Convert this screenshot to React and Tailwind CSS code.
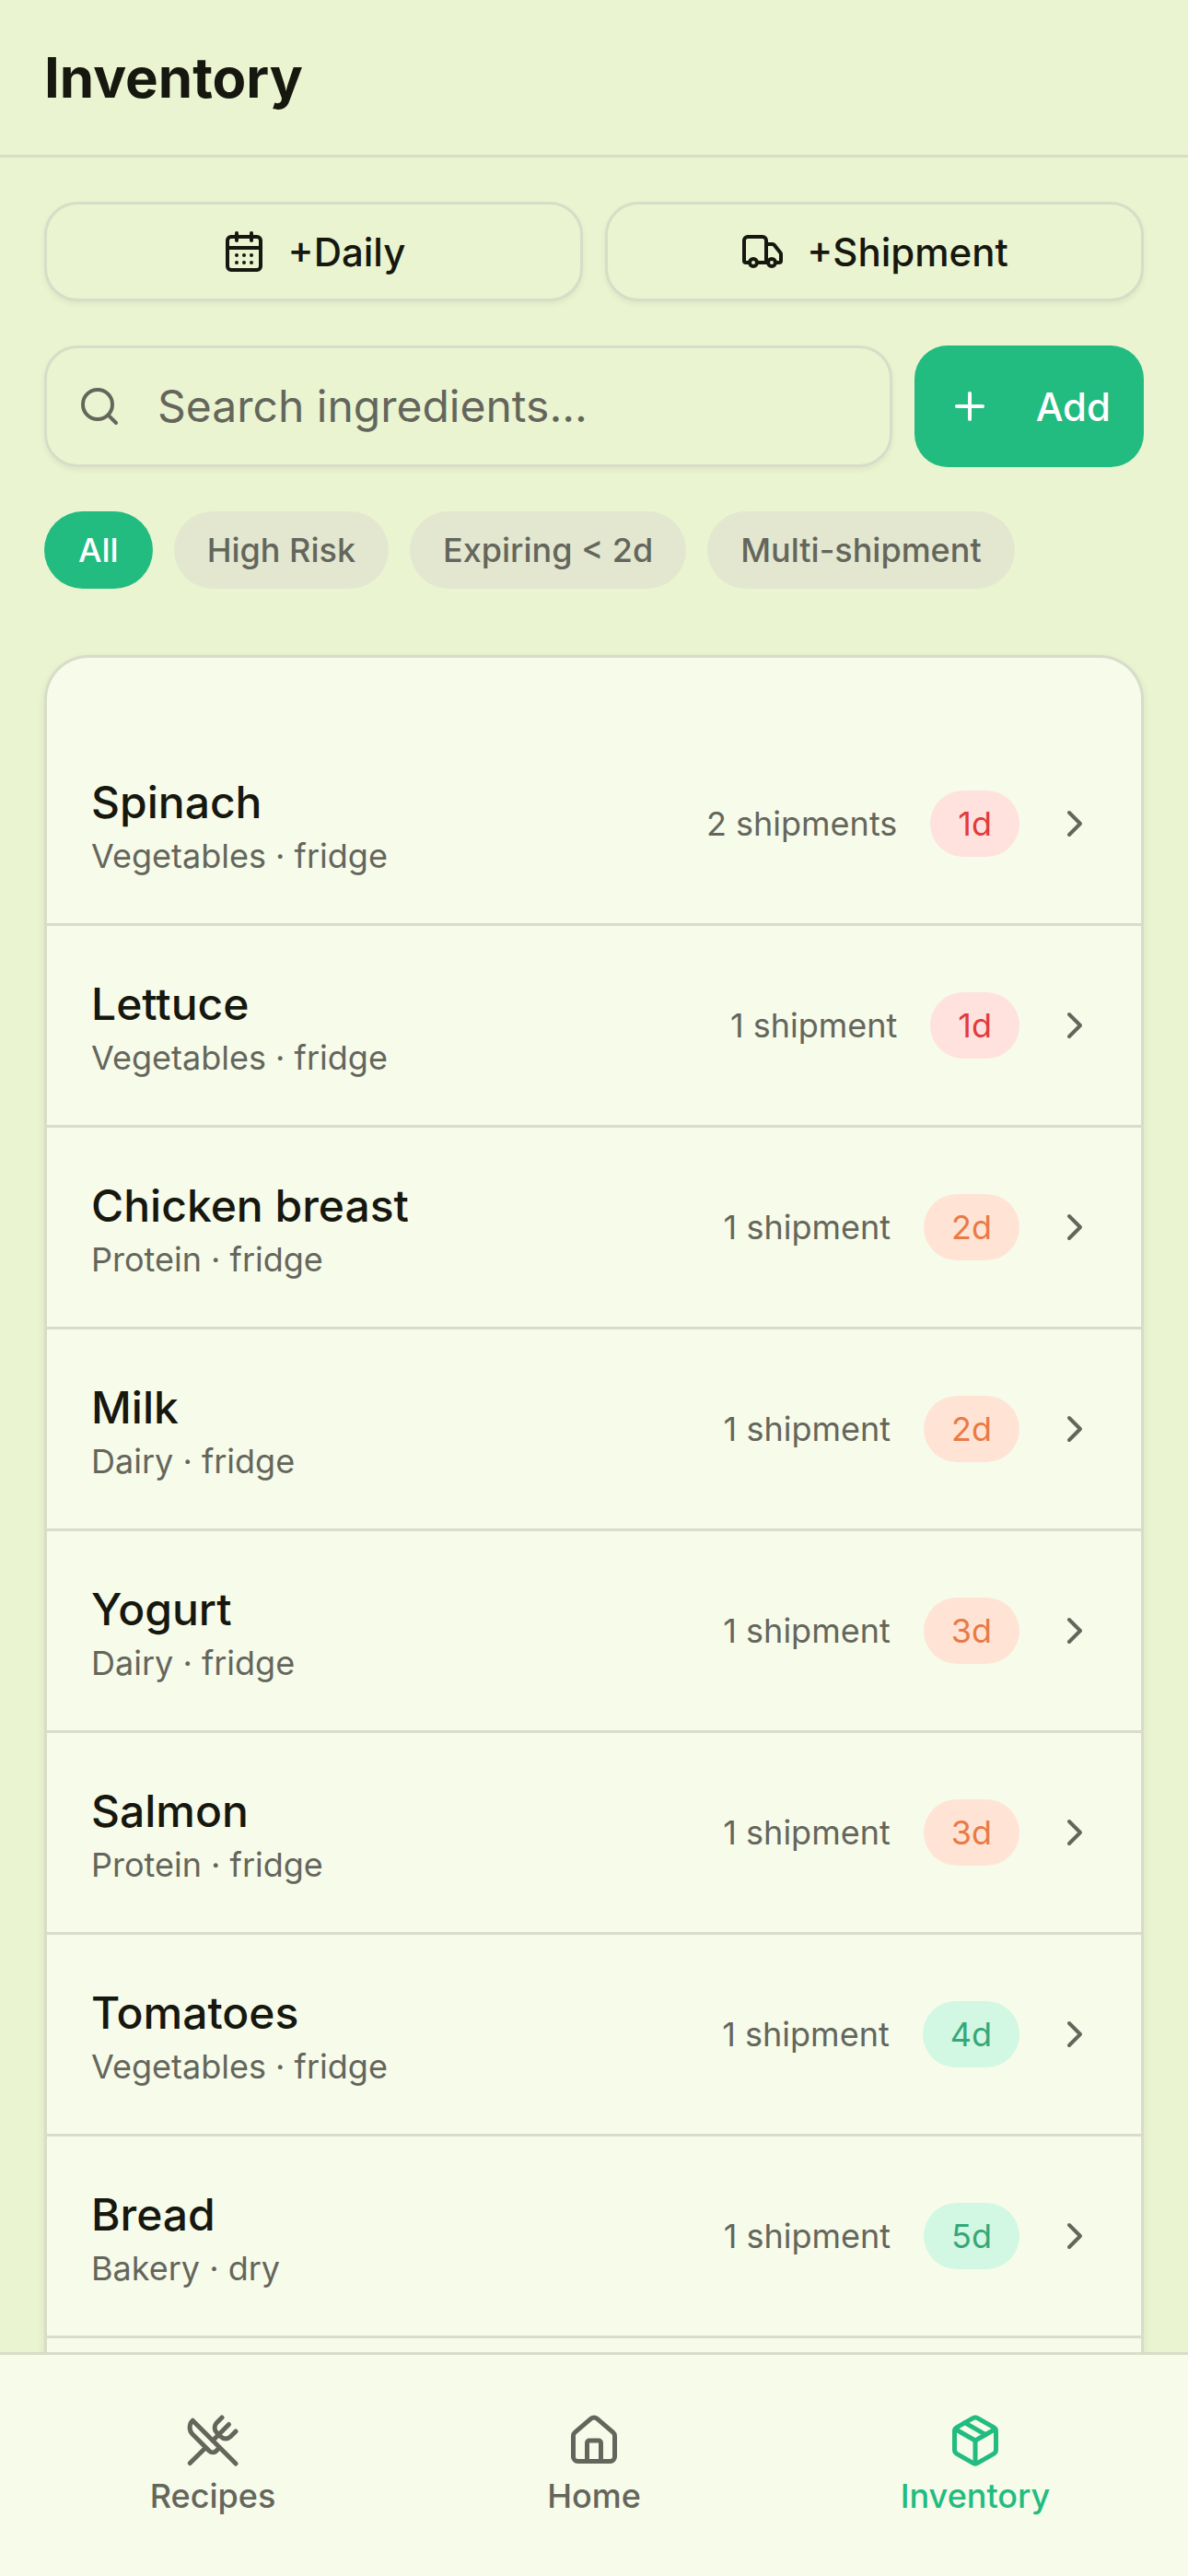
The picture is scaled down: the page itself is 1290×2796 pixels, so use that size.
import React from "react";
import { CalendarDays, Truck, Search, Plus, ChevronRight, UtensilsCrossed, House, Package } from "lucide-react";

const rows = [
  ["Spinach", "Vegetables · fridge", "2 shipments", "1d", "red"],
  ["Lettuce", "Vegetables · fridge", "1 shipment", "1d", "red"],
  ["Chicken breast", "Protein · fridge", "1 shipment", "2d", "orange"],
  ["Milk", "Dairy · fridge", "1 shipment", "2d", "orange"],
  ["Yogurt", "Dairy · fridge", "1 shipment", "3d", "orange"],
  ["Salmon", "Protein · fridge", "1 shipment", "3d", "orange"],
  ["Tomatoes", "Vegetables · fridge", "1 shipment", "4d", "green"],
  ["Bread", "Bakery · dry", "1 shipment", "5d", "green"],
];

const badge = {
  red: "bg-[#ffe1de] text-[#e23b3b]",
  orange: "bg-[#ffe4d6] text-[#ea7a45]",
  green: "bg-[#d2f7e3] text-[#35a878]",
};

function Row({ name, sub, count, days, tone }) {
  return (
    <div className="flex h-[219px] shrink-0 items-center justify-between border-b-[3px] border-[#d8dcc8] px-[48px]">
      <div className="flex flex-col">
        <span className="text-[48px] leading-[70px] font-medium text-[#16170f]">{name}</span>
        <span className="text-[36px] leading-[46px] text-[#64665c]">{sub}</span>
      </div>
      <div className="flex items-center gap-[36px]">
        <span className="text-[36px] leading-[54px] text-[#64665c]">{count}</span>
        <span className={`flex h-[72px] items-center rounded-full px-[30px] text-[36px] ${badge[tone]}`}>{days}</span>
        <ChevronRight size={48} className="text-[#64665c]" />
      </div>
    </div>
  );
}

function Chip({ children, active }) {
  return (
    <span className={`flex h-[84px] items-center rounded-full text-[36px] font-medium ${active ? "bg-[#22bb80] px-[37px] text-white" : "bg-[#e3e7d0] px-[36px] text-[#64665c]"}`}>{children}</span>
  );
}

function Tab({ icon: Icon, label, active }) {
  return (
    <div className={`flex flex-col items-center gap-[3px] ${active ? "text-[#22bb80]" : "text-[#64665c]"}`}>
      <Icon size={60} />
      <span className="text-[36px] leading-[54px] font-medium">{label}</span>
    </div>
  );
}

function Action({ icon: Icon, label }) {
  return (
    <button className="flex h-[108px] flex-1 items-center justify-center gap-[24px] rounded-[36px] border-[3px] border-[#d8dcc8] bg-[#eaf4d0] text-[42px] font-medium text-[#16170f] shadow-[0_3px_6px_rgba(0,0,0,0.06)]">
      <Icon size={48} />
      {label}
    </button>
  );
}

export default function App() {
  return (
    <div className="flex h-[2796px] w-[1290px] flex-col overflow-hidden bg-[#eaf4d0]" style={{ fontFamily: "Inter, sans-serif" }}>
      <header className="flex h-[171px] shrink-0 items-center border-b-[3px] border-[#d8dcc8] px-[48px]">
        <h1 className="text-[60px] font-bold text-[#16170f]">Inventory</h1>
      </header>
      <main className="flex min-h-0 flex-1 flex-col overflow-hidden px-[48px] pt-[48px]">
        <div className="flex gap-[24px]">
          <Action icon={CalendarDays} label="+Daily" />
          <Action icon={Truck} label="+Shipment" />
        </div>
        <div className="mt-[48px] flex gap-[24px]">
          <div className="flex h-[132px] flex-1 items-center gap-[39px] rounded-[36px] border-[3px] border-[#d8dcc8] pl-[33px] shadow-[0_3px_6px_rgba(0,0,0,0.06)]">
            <Search size={48} className="text-[#64665c]" />
            <span className="text-[48px] text-[#64665c]">Search ingredients...</span>
          </div>
          <button className="flex h-[132px] items-center gap-[48px] rounded-[36px] bg-[#22bb80] px-[36px] text-[42px] font-medium text-white">
            <Plus size={48} />
            Add
          </button>
        </div>
        <div className="mt-[48px] flex gap-[23px]">
          <Chip active>All</Chip>
          <Chip>High Risk</Chip>
          <Chip>Expiring &lt; 2d</Chip>
          <Chip>Multi-shipment</Chip>
        </div>
        <div className="mt-[72px] flex flex-col rounded-t-[48px] border-x-[3px] border-t-[3px] border-[#d8dcc8] bg-[#f7fbea] pt-[72px] shadow-[0_3px_9px_rgba(0,0,0,0.08)]">
          {rows.map((r) => (
            <Row key={r[0]} name={r[0]} sub={r[1]} count={r[2]} days={r[3]} tone={r[4]} />
          ))}
          <div className="h-[219px] shrink-0" />
        </div>
      </main>
      <nav className="grid h-[243px] shrink-0 grid-cols-3 items-start border-t-[3px] border-[#d8dcc8] bg-[#f7fbea] px-[24px] pt-[63px]">
        <Tab icon={UtensilsCrossed} label="Recipes" />
        <Tab icon={House} label="Home" />
        <Tab icon={Package} label="Inventory" active />
      </nav>
    </div>
  );
}
